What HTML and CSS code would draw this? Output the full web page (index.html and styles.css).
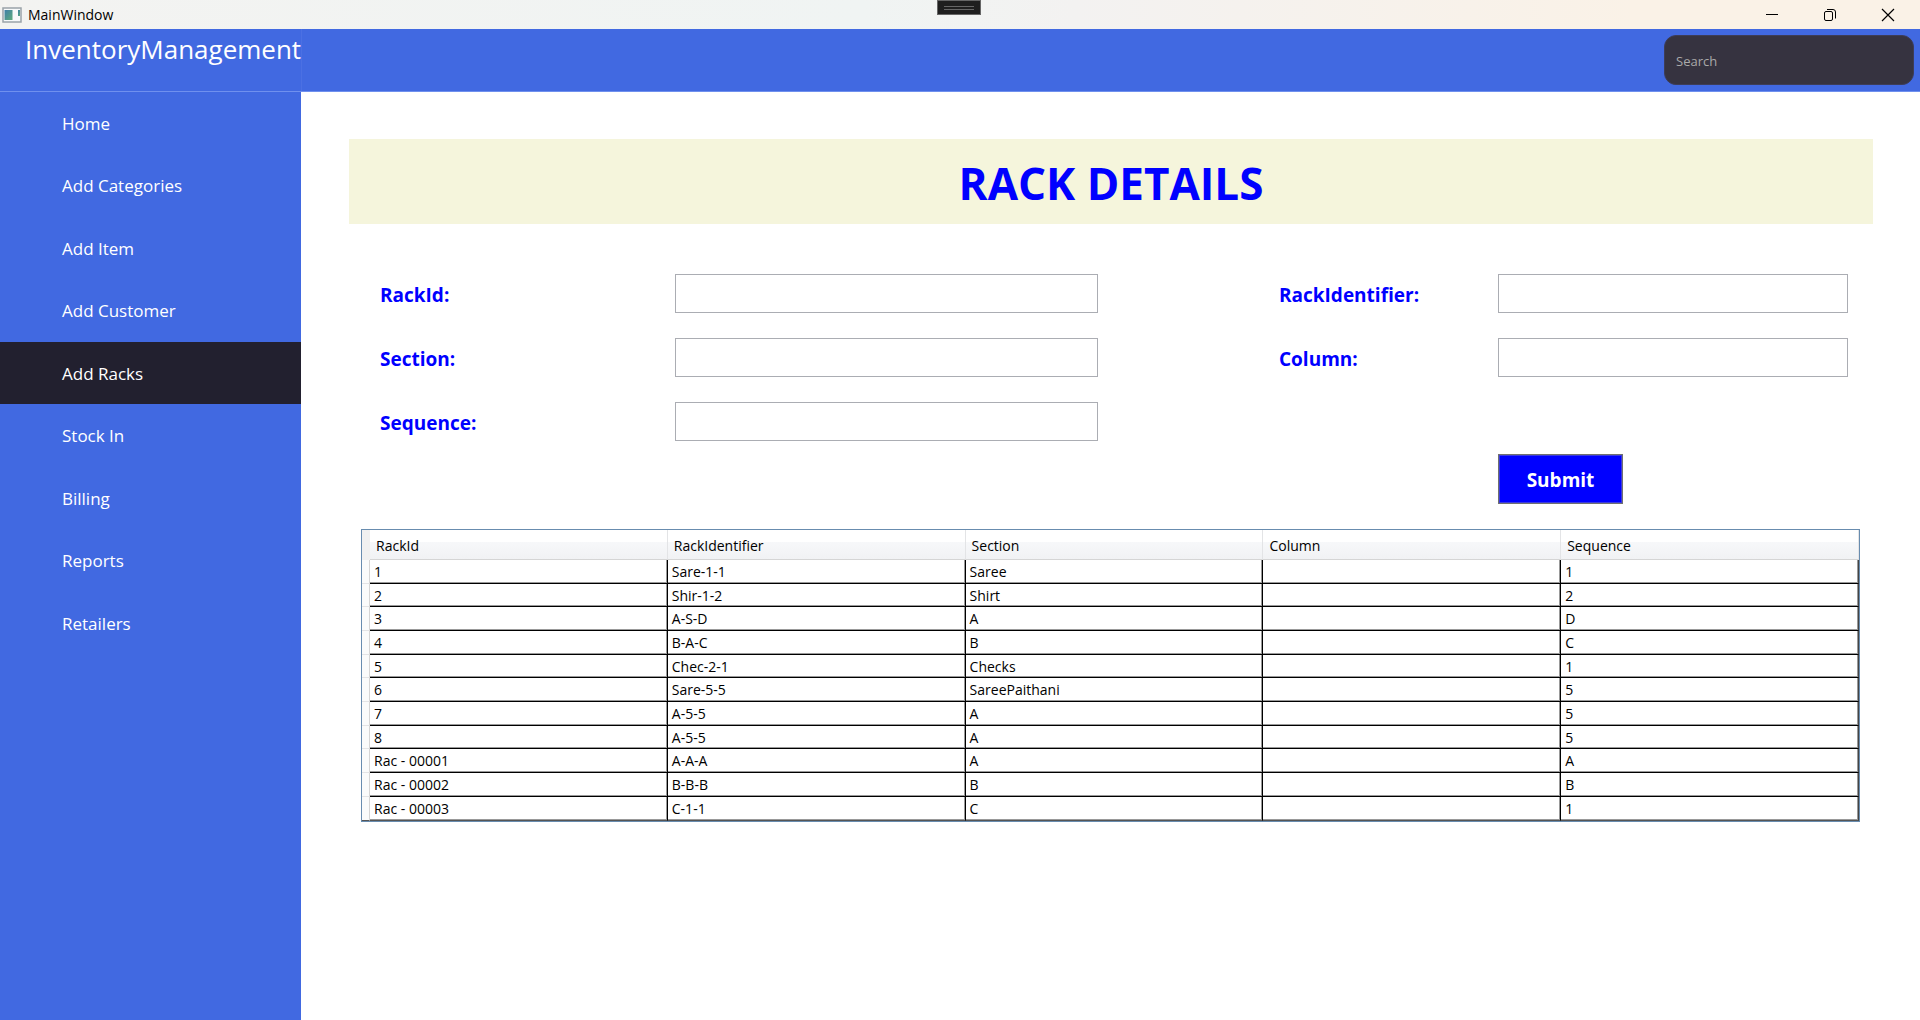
FILE: index.html
```html
<!DOCTYPE html>
<html lang="en">
<head>
<meta charset="utf-8">
<title>MainWindow</title>
<link rel="stylesheet" href="styles.css">
</head>
<body>
<div class="window">
  <header class="titlebar">
    <svg class="app-icon" width="20" height="16" viewBox="0 0 20 16" aria-hidden="true">
      <defs><linearGradient id="pane" x1="0" y1="0" x2="1" y2="1"><stop offset="0" stop-color="#3f7fa8"/><stop offset="1" stop-color="#5cab7c"/></linearGradient></defs>
      <rect x="1" y="1" width="18" height="14" fill="#f7f9fa" stroke="#9aa3a9" stroke-width="1.5"/>
      <rect x="2.500" y="3" width="8" height="10" fill="url(#pane)"/>
      <rect x="16" y="3" width="2" height="6" fill="url(#pane)"/>
    </svg>
    <span class="window-title">MainWindow</span>
    <div class="debug-handle"><span></span></div>
    <div class="window-controls">
      <button type="button" aria-label="Minimize"><svg width="14" height="14" viewBox="0 0 14 14"><path d="M1 6.500h12" stroke="#000"/></svg></button>
      <button type="button" aria-label="Restore"><svg width="14" height="14" viewBox="0 0 14 14" fill="none" stroke="#000"><rect x="1.500" y="3.500" width="8" height="9" rx="1.500"/><path d="M4 1.500h6a2.500 2.500 0 0 1 2.500 2.500v6.500"/></svg></button>
      <button type="button" aria-label="Close"><svg width="14" height="14" viewBox="0 0 14 14"><path d="M1 1l12 12M13 1L1 13" stroke="#000" stroke-width="1.200"/></svg></button>
    </div>
  </header>
  <div class="topbar">
    <div class="brand">InventoryManagement</div>
    <input class="search" type="search" placeholder="Search" aria-label="Search">
  </div>
  <div class="body">
    <nav class="sidebar">
      <a href="#">Home</a>
      <a href="#">Add Categories</a>
      <a href="#">Add Item</a>
      <a href="#">Add Customer</a>
      <a href="#" class="active" aria-current="page">Add Racks</a>
      <a href="#">Stock In</a>
      <a href="#">Billing</a>
      <a href="#">Reports</a>
      <a href="#">Retailers</a>
    </nav>
    <main class="content">
      <h1>RACK DETAILS</h1>
      <form class="rack-form">
        <label for="rack-id">RackId:</label>
        <input id="rack-id" type="text">
        <label class="second" for="rack-identifier">RackIdentifier:</label>
        <input id="rack-identifier" type="text">
        <label for="section">Section:</label>
        <input id="section" type="text">
        <label class="second" for="column">Column:</label>
        <input id="column" type="text">
        <label for="sequence">Sequence:</label>
        <input id="sequence" type="text">
        <button class="submit" type="button">Submit</button>
      </form>
      <table class="grid">
        <thead>
          <tr><td class="row-head"></td><th>RackId</th><th>RackIdentifier</th><th>Section</th><th>Column</th><th>Sequence</th></tr>
        </thead>
        <tbody>
          <tr><td class="row-head"></td><td>1</td><td>Sare-1-1</td><td>Saree</td><td></td><td>1</td></tr>
          <tr><td class="row-head"></td><td>2</td><td>Shir-1-2</td><td>Shirt</td><td></td><td>2</td></tr>
          <tr><td class="row-head"></td><td>3</td><td>A-S-D</td><td>A</td><td></td><td>D</td></tr>
          <tr><td class="row-head"></td><td>4</td><td>B-A-C</td><td>B</td><td></td><td>C</td></tr>
          <tr><td class="row-head"></td><td>5</td><td>Chec-2-1</td><td>Checks</td><td></td><td>1</td></tr>
          <tr><td class="row-head"></td><td>6</td><td>Sare-5-5</td><td>SareePaithani</td><td></td><td>5</td></tr>
          <tr><td class="row-head"></td><td>7</td><td>A-5-5</td><td>A</td><td></td><td>5</td></tr>
          <tr><td class="row-head"></td><td>8</td><td>A-5-5</td><td>A</td><td></td><td>5</td></tr>
          <tr><td class="row-head"></td><td>Rac - 00001</td><td>A-A-A</td><td>A</td><td></td><td>A</td></tr>
          <tr><td class="row-head"></td><td>Rac - 00002</td><td>B-B-B</td><td>B</td><td></td><td>B</td></tr>
          <tr><td class="row-head"></td><td>Rac - 00003</td><td>C-1-1</td><td>C</td><td></td><td>1</td></tr>
        </tbody>
      </table>
    </main>
  </div>
</div>
</body>
</html>
```
FILE: styles.css
```css
* { box-sizing: border-box; }

body {
  margin: 0;
  font-family: "Segoe UI", "Open Sans", "Noto Sans", sans-serif;
  font-size: 14px;
  color: #000;
  background: #fff;
}

.window {
  display: flex;
  flex-direction: column;
  min-height: 100vh;
}

/* Title bar */
.titlebar {
  position: relative;
  display: flex;
  align-items: center;
  height: 29px;
  padding: 0 3px 0 2px;
  background: linear-gradient(90deg, #f3f3f1, #f0f4f3 45%, #f3f2f1 56%, #faf2e7 85%);
}
.window-title { margin-left: 6px; }
.window-controls { display: flex; margin-left: auto; }
.window-controls button {
  display: flex;
  align-items: center;
  justify-content: center;
  width: 58px;
  height: 29px;
  padding: 0;
  border: 0;
  background: none;
}
.debug-handle {
  position: absolute;
  top: 0;
  left: calc(50% - 23px);
  width: 44px;
  height: 15px;
  padding: 5px 6px;
  border: 1px solid #666;
  background: #1f1f1f;
}
.debug-handle span {
  display: block;
  height: 4px;
  border: solid #666;
  border-width: 1px 0;
}

/* Application bar */
.topbar {
  display: flex;
  justify-content: space-between;
  height: 63px;
  border-bottom: 1px solid #6f90ee;
  background: #4169e1;
}
.brand {
  width: 302px;
  padding-left: 25px;
  border-right: 1px solid #4b70e3;
  font-size: 26px;
  line-height: 41px;
  color: #fff;
}
.search {
  width: 250px;
  height: 50px;
  margin: 6px;
  padding: 2px 12px 0 11px;
  border: 1px solid #3d3d58;
  border-radius: 12px;
  background: #363340;
  font: inherit;
  font-size: 13px;
  color: #fff;
}
.search::placeholder { color: #a9a9a9; opacity: 1; }

.body { display: flex; flex: 1; }

/* Navigation */
.sidebar {
  flex: 0 0 301px;
  background: #4169e1;
}
.sidebar a {
  display: flex;
  align-items: center;
  height: 62px;
  padding-left: 62px;
  font-size: 17px;
  color: #fff;
  text-decoration: none;
}
.sidebar a:nth-child(even) { height: 63px; }
.sidebar .active { background: #22202f; }

/* Rack page */
.content {
  flex: 1;
  min-width: 0;
  padding: 47px 47px 47px 48px;
}
h1 {
  margin: 0;
  height: 85px;
  background: #f5f5dc;
  font-size: 44px;
  line-height: 89px;
  text-align: center;
  color: #00f;
}
.rack-form {
  display: grid;
  grid-template-columns: 295px 423fr 181px 219px 350fr;
  grid-template-rows: 39px 39px 39px 50px;
  row-gap: 25px;
  margin: 50px 25px 0 31px;
}
.rack-form label {
  grid-column: 1;
  padding-top: 4px;
  font-size: 19px;
  font-weight: 700;
  line-height: 34px;
  color: #00f;
}
.rack-form label.second { grid-column: 4; }
.rack-form input {
  width: 100%;
  height: 39px;
  padding: 0 8px;
  border: 1px solid #abadb3;
  background: #fff;
  font: inherit;
}
.rack-form .submit {
  grid-column: 5;
  grid-row: 4;
  width: 125px;
  height: 50px;
  margin-top: -12px;
  padding: 2px 0 0;
  border: 1px solid #707070;
  box-shadow: inset 0 0 0 1px #3c3cdc;
  background: #00f;
  font: inherit;
  font-size: 19px;
  font-weight: 700;
  color: #fff;
}

/* Data grid */
.grid {
  width: calc(100% - 25px);
  margin: 13px 13px 0 12px;
  border: 1px solid #688caf;
  border-collapse: separate;
  border-spacing: 0;
  table-layout: fixed;
  line-height: 20px;
}
.grid td, .grid th { padding: 1px 4px 0; text-align: left; font-weight: 400; }
.grid th {
  height: 30px;
  padding: 2px 6px 0;
  border-right: 1px solid #e3e4e6;
  border-bottom: 1px solid #d5d5d5;
  background: linear-gradient(#fff 40%, #f7f8fa 40%, #f1f2f4);
}
.grid tbody tr { height: 24px; }
.grid tbody tr:nth-child(3n+2) { height: 23px; }
.grid tbody tr:last-child { height: 24px; }
.grid tbody td {
  border-right: 1px solid #000;
  border-bottom: 1px solid #000;
  box-shadow: inset -1px -1px #999;
}
.grid tbody td:last-child { border-right-color: #444; }
.grid tbody tr:last-child td { border-bottom-color: #555; }
.grid .row-head {
  width: 8px;
  padding: 0;
  background: #f0f0f0;
}
.grid tbody .row-head {
  border-right: 1px solid #d5d5d5;
  border-bottom: 1px solid #e3e4e6;
  background: #fafbfb;
  box-shadow: none;
}
```
